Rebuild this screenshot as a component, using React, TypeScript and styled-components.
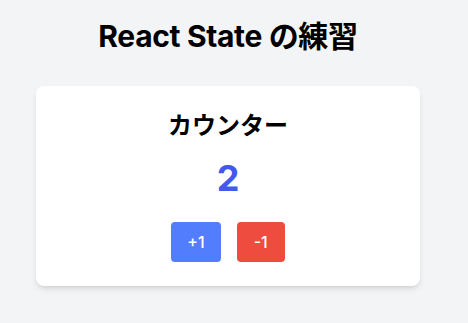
import React, { useState } from "react";
import styled, { createGlobalStyle } from "styled-components";

const GlobalStyle = createGlobalStyle`
    html, body {
        margin: 0;
        padding: 0;
        background: #f3f4f6;
    }
    body {
        font-family: Inter, "Noto Sans CJK JP", sans-serif;
        color: #000;
    }
`;

const Page = styled.main`
    width: 456px;
    min-height: 323px;
    padding-top: 18px;
    display: flex;
    flex-direction: column;
    align-items: center;
    box-sizing: border-box;
`;

const Title = styled.h1`
    margin: 0 0 32px;
    font-size: 30px;
    line-height: 36px;
    font-weight: 700;
    letter-spacing: -0.35px;
`;

const Card = styled.section`
    width: 384px;
    box-sizing: border-box;
    padding: 24px;
    background: #fff;
    border-radius: 8px;
    box-shadow: 0 4px 6px -1px rgba(0, 0, 0, 0.1), 0 2px 4px -2px rgba(0, 0, 0, 0.1);
    display: flex;
    flex-direction: column;
    align-items: center;
`;

const CardTitle = styled.h2`
    margin: 0 0 16px;
    font-size: 24px;
    line-height: 32px;
    font-weight: 700;
`;

const Count = styled.p`
    margin: 0 0 24px;
    font-size: 36px;
    line-height: 40px;
    font-weight: 700;
    color: #4258ef;
`;

const Buttons = styled.div`
    display: flex;
    gap: 16px;
`;

const CountButton = styled.button<{ $tone: "up" | "down" }>`
    border: none;
    border-radius: 4px;
    padding: 8px 16px;
    font-family: Inter, sans-serif;
    font-size: 16px;
    line-height: 24px;
    font-weight: 500;
    min-width: 48px;
    color: #fff;
    cursor: pointer;
    background: ${(p) => (p.$tone === "up" ? "#527dfd" : "#ee4c3f")};
`;

export default function App() {
    const [count, setCount] = useState<number>(2);

    return (
        <>
            <GlobalStyle />
            <Page>
                <Title>React State の練習</Title>
                <Card>
                    <CardTitle>カウンター</CardTitle>
                    <Count>{count}</Count>
                    <Buttons>
                        <CountButton $tone="up" onClick={() => setCount(count + 1)}>
                            +1
                        </CountButton>
                        <CountButton $tone="down" onClick={() => setCount(count - 1)}>
                            -1
                        </CountButton>
                    </Buttons>
                </Card>
            </Page>
        </>
    );
}
